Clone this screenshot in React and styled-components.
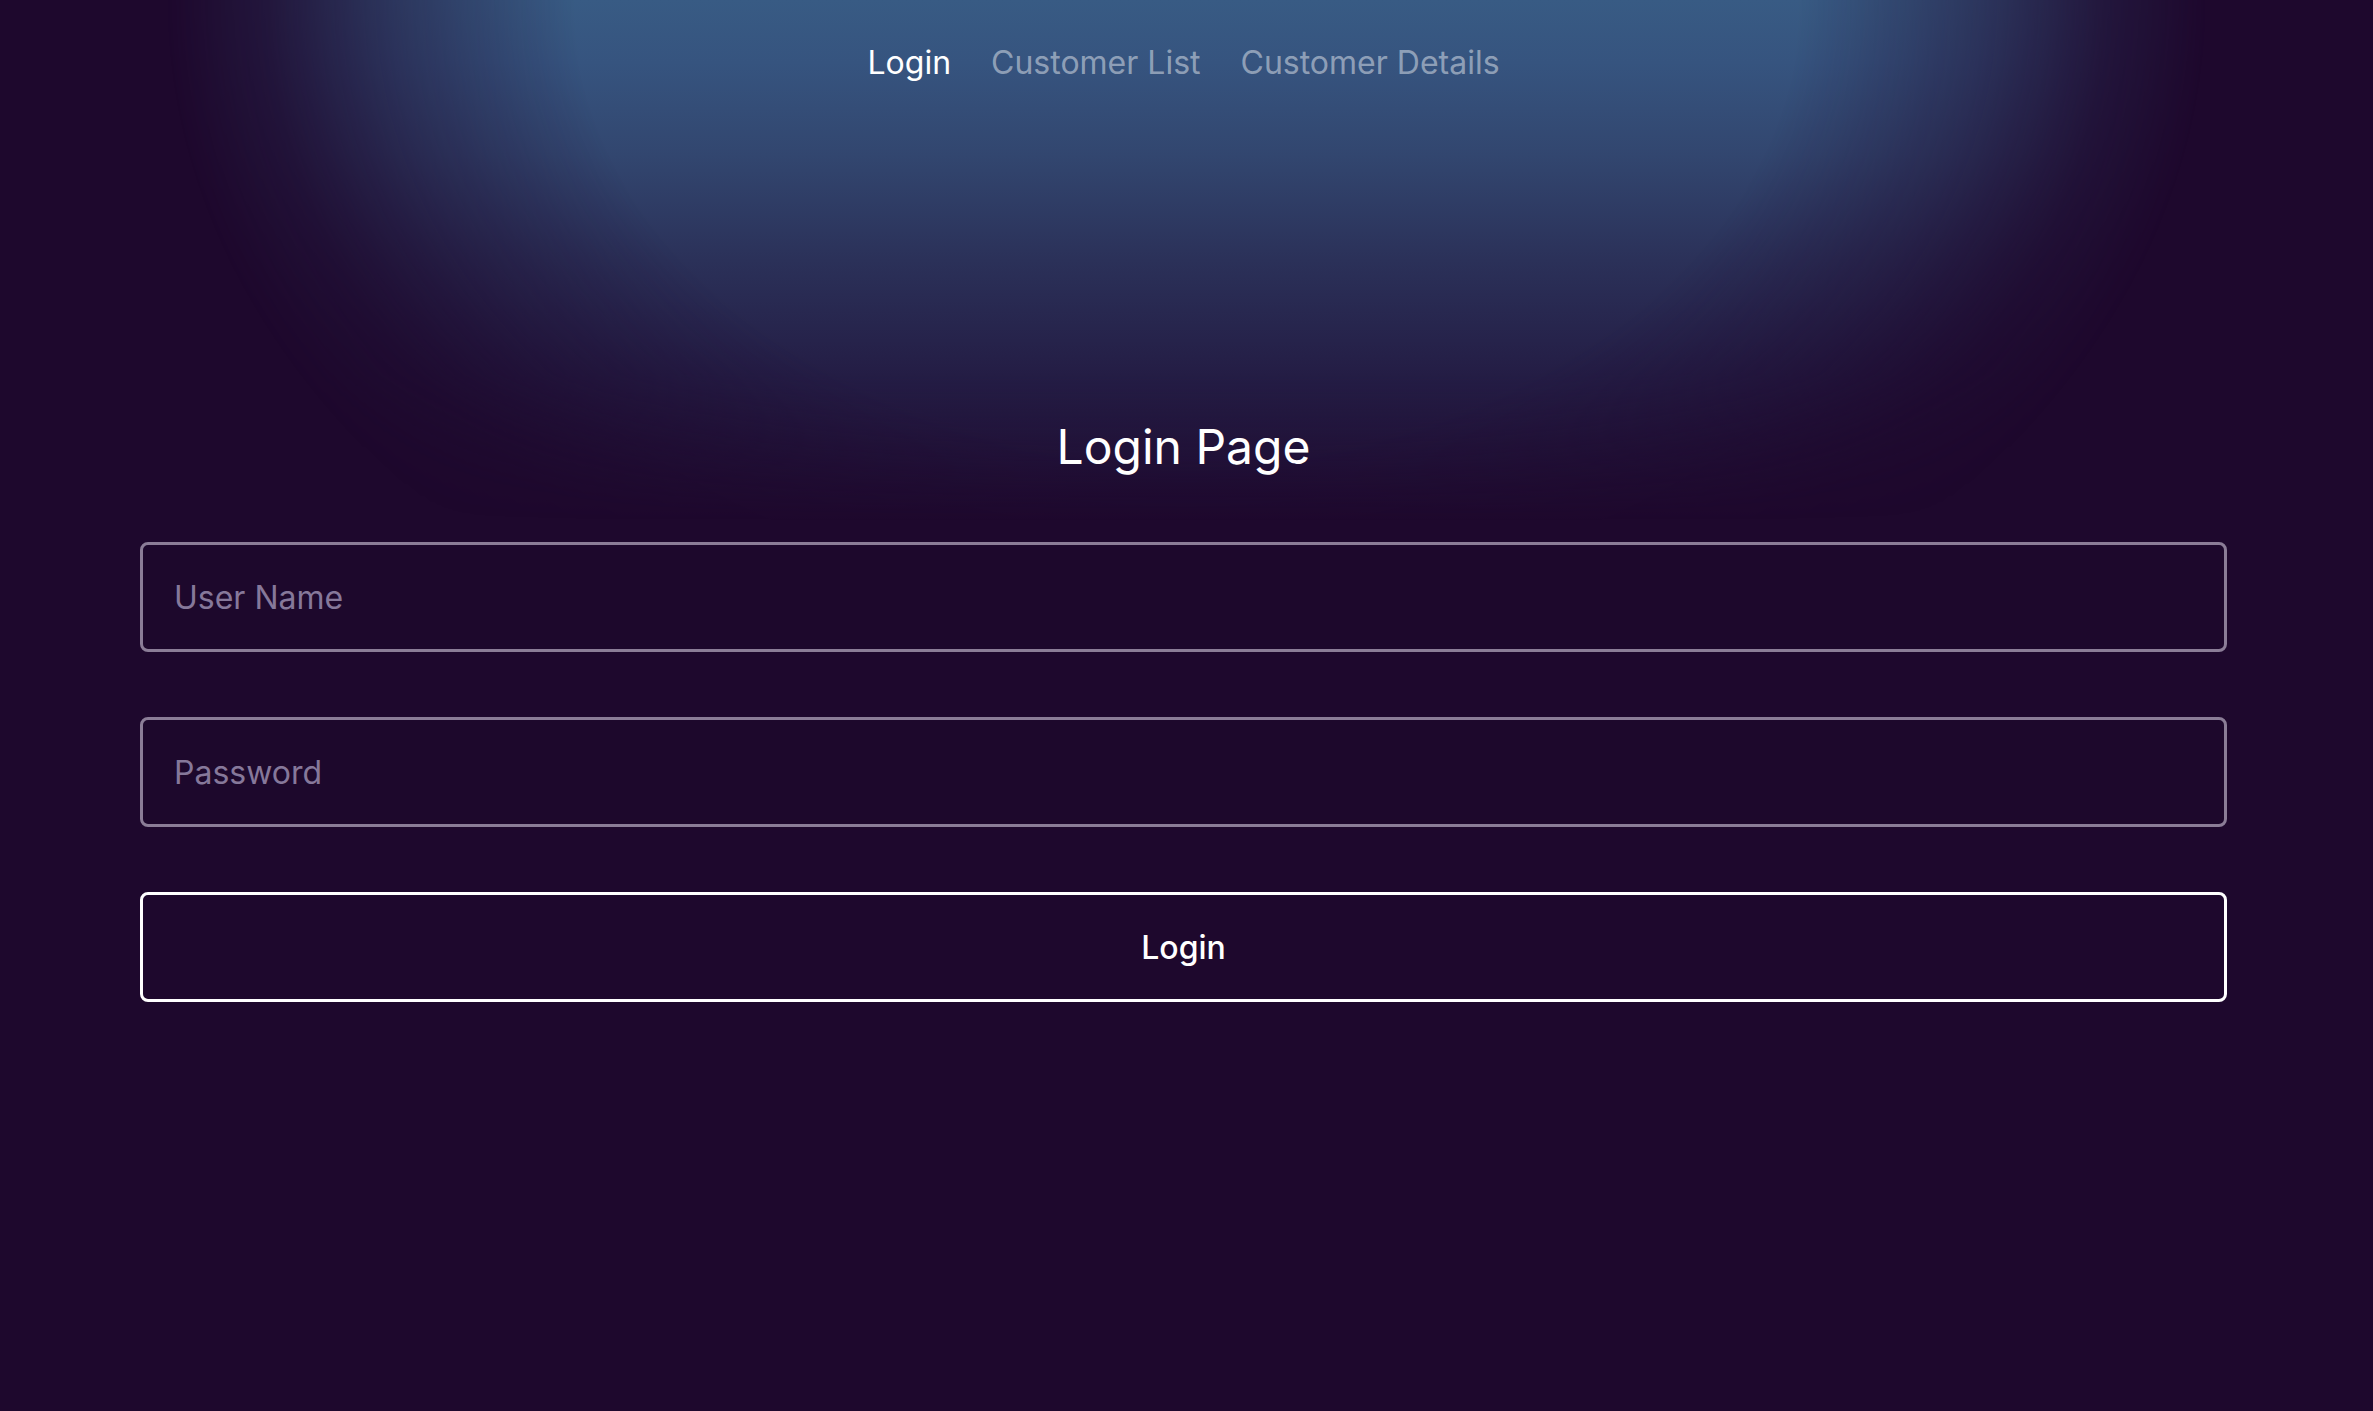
import React from "react";
import styled, { createGlobalStyle } from "styled-components";

const GlobalStyle = createGlobalStyle`
  html, body {
    margin: 0;
    padding: 0;
    background: #1e082d;
  }
  body {
    font-family: Inter, "Noto Sans", "Liberation Sans", sans-serif;
  }
  * { box-sizing: border-box; }
`;

const Page = styled.div`
  position: relative;
  min-height: 100vh;
  background: #1e082d;
  padding: 43px 146px 0 140px;
  display: flex;
  flex-direction: column;
  overflow: hidden;

  &::before {
    content: "";
    position: absolute;
    top: 0;
    left: 0;
    right: 0;
    height: 520px;
    pointer-events: none;
    background: linear-gradient(
      180deg,
      #385b84 0%,
      #36547f 12%,
      #32466f 30%,
      #2b3159 50%,
      #241d45 72%,
      rgba(30, 8, 45, 0) 100%
    );
    -webkit-mask-image: radial-gradient(
      ellipse 1020px 760px at 50% 0%,
      #000 0%,
      #000 60%,
      rgba(0, 0, 0, 0.55) 78%,
      rgba(0, 0, 0, 0.18) 90%,
      transparent 100%
    );
    mask-image: radial-gradient(
      ellipse 1020px 760px at 50% 0%,
      #000 0%,
      #000 60%,
      rgba(0, 0, 0, 0.55) 78%,
      rgba(0, 0, 0, 0.18) 90%,
      transparent 100%
    );
  }

  & > * {
    position: relative;
    z-index: 1;
  }
`;

const Nav = styled.nav`
  display: flex;
  justify-content: center;
  gap: 40px;
`;

const NavLink = styled.a`
  font-size: 32px;
  line-height: 39px;
  font-weight: 400;
  text-decoration: none;
  cursor: pointer;
  color: ${(p) => (p.$active ? "#ffffff" : "rgba(255, 255, 255, 0.45)")};
`;

const Title = styled.h1`
  margin: 336px 0 0;
  text-align: center;
  font-size: 48px;
  line-height: 58px;
  font-weight: 400;
  color: #ffffff;
`;

const Form = styled.form`
  margin-top: 66px;
  display: flex;
  flex-direction: column;
  gap: 65px;
`;

const Input = styled.input`
  height: 110px;
  width: 100%;
  padding: 0 31px;
  background: #1d082c;
  border: 3px solid #8b7d97;
  border-radius: 8px;
  font-family: inherit;
  font-size: 32px;
  color: #ffffff;
  outline: none;
  &::placeholder {
    color: #86789a;
  }
`;

const Button = styled.button`
  height: 110px;
  width: 100%;
  background: transparent;
  border: 3px solid #ffffff;
  border-radius: 8px;
  font-family: inherit;
  font-size: 32px;
  font-weight: 500;
  color: #ffffff;
  cursor: pointer;
`;

export default function App() {
  return (
    <>
      <GlobalStyle />
      <Page>
        <Nav>
          <NavLink $active>Login</NavLink>
          <NavLink>Customer List</NavLink>
          <NavLink>Customer Details</NavLink>
        </Nav>
        <Title>Login Page</Title>
        <Form onSubmit={(e) => e.preventDefault()}>
          <Input type="text" placeholder="User Name" />
          <Input type="password" placeholder="Password" />
          <Button type="submit">Login</Button>
        </Form>
      </Page>
    </>
  );
}
